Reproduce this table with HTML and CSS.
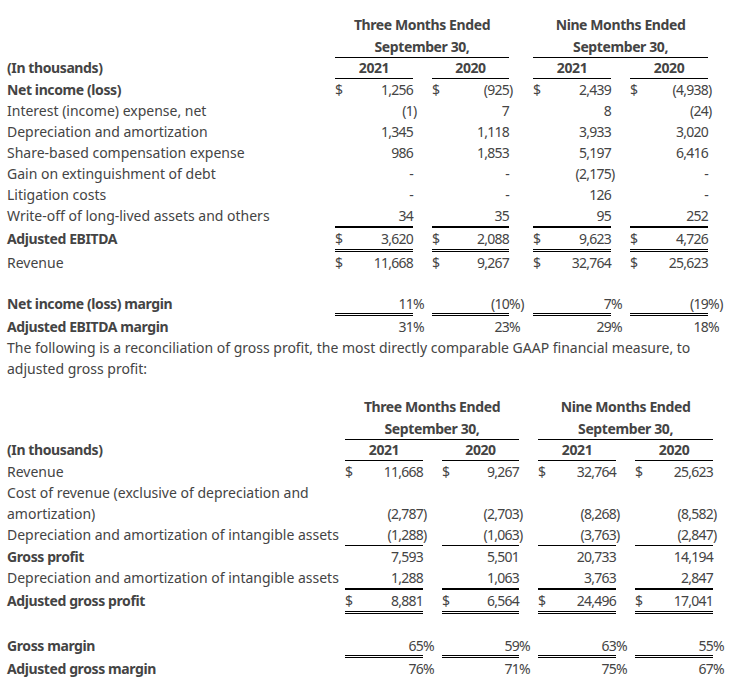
FILE: index.html
```html
<!DOCTYPE html>
<html>
<head>
<meta charset="utf-8">
<link rel="stylesheet" href="styles.css">
</head>
<body>
<div class="page">
  <table class="fin t1">
    <colgroup>
      <col class="c-label1"><col class="c-v"><col class="c-s19"><col class="c-v2"><col class="c-s24"><col class="c-v"><col class="c-s19"><col class="c-v"><col class="c-s17">
    </colgroup>
    <tbody>
      <tr class="r-h1"><td></td><td class="hd" colspan="3">Three Months Ended</td><td></td><td class="hd" colspan="3">Nine Months Ended</td><td></td></tr>
      <tr><td></td><td class="hd u1" colspan="3">September 30,</td><td></td><td class="hd u1" colspan="3">September 30,</td><td></td></tr>
      <tr class="r-yr"><td class="b">(In thousands)</td><td class="hd u1">2021</td><td></td><td class="hd u1">2020</td><td></td><td class="hd u1">2021</td><td></td><td class="hd u1">2020</td><td></td></tr>
      <tr><td class="b">Net income (loss)</td><td class="v"><span class="cur">$</span>1,256</td><td></td><td class="v"><span class="cur">$</span>(925</td><td class="s">)</td><td class="v"><span class="cur">$</span>2,439</td><td></td><td class="v"><span class="cur">$</span>(4,938</td><td class="s">)</td></tr>
      <tr><td>Interest (income) expense, net</td><td class="v">(1</td><td class="s">)</td><td class="v">7</td><td></td><td class="v">8</td><td></td><td class="v">(24</td><td class="s">)</td></tr>
      <tr><td>Depreciation and amortization</td><td class="v">1,345</td><td></td><td class="v">1,118</td><td></td><td class="v">3,933</td><td></td><td class="v">3,020</td><td></td></tr>
      <tr><td>Share-based compensation expense</td><td class="v">986</td><td></td><td class="v">1,853</td><td></td><td class="v">5,197</td><td></td><td class="v">6,416</td><td></td></tr>
      <tr><td>Gain on extinguishment of debt</td><td class="v">-</td><td></td><td class="v">-</td><td></td><td class="v">(2,175</td><td class="s">)</td><td class="v">-</td><td></td></tr>
      <tr><td>Litigation costs</td><td class="v">-</td><td></td><td class="v">-</td><td></td><td class="v">126</td><td></td><td class="v">-</td><td></td></tr>
      <tr><td>Write-off of long-lived assets and others</td><td class="v u2">34</td><td></td><td class="v u2">35</td><td></td><td class="v u2">95</td><td></td><td class="v u2">252</td><td></td></tr>
      <tr><td class="b">Adjusted EBITDA</td><td class="v dbl"><span class="cur">$</span>3,620</td><td></td><td class="v dbl"><span class="cur">$</span>2,088</td><td></td><td class="v dbl"><span class="cur">$</span>9,623</td><td></td><td class="v dbl"><span class="cur">$</span>4,726</td><td></td></tr>
      <tr><td>Revenue</td><td class="v"><span class="cur">$</span>11,668</td><td></td><td class="v"><span class="cur">$</span>9,267</td><td></td><td class="v"><span class="cur">$</span>32,764</td><td></td><td class="v"><span class="cur">$</span>25,623</td><td></td></tr>
      <tr class="gap"><td colspan="9"></td></tr>
      <tr class="r-mg"><td class="b">Net income (loss) margin</td><td class="v dbl">11</td><td class="s">%</td><td class="v dbl">(10</td><td class="s">%)</td><td class="v dbl">7</td><td class="s">%</td><td class="v dbl">(19</td><td class="s">%)</td></tr>
      <tr><td class="b">Adjusted EBITDA margin</td><td class="v">31</td><td class="s">%</td><td class="v">23</td><td class="s">%</td><td class="v">29</td><td class="s">%</td><td class="v">18</td><td class="s">%</td></tr>
    </tbody>
  </table>

  <p class="note">The following is a reconciliation of gross profit, the most directly comparable GAAP financial measure, to adjusted gross profit:</p>

  <table class="fin t2">
    <colgroup>
      <col class="c-label2"><col class="c-v"><col class="c-s19"><col class="c-v2"><col class="c-s19"><col class="c-v"><col class="c-s19"><col class="c-v"><col class="c-s11">
    </colgroup>
    <tbody>
      <tr class="r-h1"><td></td><td class="hd" colspan="3">Three Months Ended</td><td></td><td class="hd" colspan="3">Nine Months Ended</td><td></td></tr>
      <tr><td></td><td class="hd u1" colspan="3">September 30,</td><td></td><td class="hd u1" colspan="3">September 30,</td><td></td></tr>
      <tr class="r-yr"><td class="b">(In thousands)</td><td class="hd u1">2021</td><td></td><td class="hd u1">2020</td><td></td><td class="hd u1">2021</td><td></td><td class="hd u1">2020</td><td></td></tr>
      <tr><td>Revenue</td><td class="v"><span class="cur">$</span>11,668</td><td></td><td class="v"><span class="cur">$</span>9,267</td><td></td><td class="v"><span class="cur">$</span>32,764</td><td></td><td class="v"><span class="cur">$</span>25,623</td><td></td></tr>
      <tr class="wrap"><td>Cost of revenue (exclusive of depreciation and amortization)</td><td class="v">(2,787</td><td class="s">)</td><td class="v">(2,703</td><td class="s">)</td><td class="v">(8,268</td><td class="s">)</td><td class="v">(8,582</td><td class="s">)</td></tr>
      <tr><td class="nw">Depreciation and amortization of intangible assets</td><td class="v u1">(1,288</td><td class="s">)</td><td class="v u1">(1,063</td><td class="s">)</td><td class="v u1">(3,763</td><td class="s">)</td><td class="v u1">(2,847</td><td class="s">)</td></tr>
      <tr><td class="b">Gross profit</td><td class="v">7,593</td><td></td><td class="v">5,501</td><td></td><td class="v">20,733</td><td></td><td class="v">14,194</td><td></td></tr>
      <tr><td class="nw">Depreciation and amortization of intangible assets</td><td class="v u2">1,288</td><td></td><td class="v u2">1,063</td><td></td><td class="v u2">3,763</td><td></td><td class="v u2">2,847</td><td></td></tr>
      <tr><td class="b">Adjusted gross profit</td><td class="v dbl"><span class="cur">$</span>8,881</td><td></td><td class="v dbl"><span class="cur">$</span>6,564</td><td></td><td class="v dbl"><span class="cur">$</span>24,496</td><td></td><td class="v dbl"><span class="cur">$</span>17,041</td><td></td></tr>
      <tr class="gap gap-lg"><td colspan="9"></td></tr>
      <tr class="r-mg"><td class="b">Gross margin</td><td class="v dbl">65</td><td class="s">%</td><td class="v dbl">59</td><td class="s">%</td><td class="v dbl">63</td><td class="s">%</td><td class="v dbl">55</td><td class="s">%</td></tr>
      <tr><td class="b">Adjusted gross margin</td><td class="v">76</td><td class="s">%</td><td class="v">71</td><td class="s">%</td><td class="v">75</td><td class="s">%</td><td class="v">67</td><td class="s">%</td></tr>
    </tbody>
  </table>
</div>
</body>
</html>
```
FILE: styles.css
```css
html, body {
  margin: 0;
  padding: 0;
  background: #ffffff;
}

body {
  color: #444444;
  font-family: "Noto Sans", "Open Sans", sans-serif;
  font-size: 14px;
  line-height: 21px;
}

.page {
  padding: 14px 7px 0 7px;
}

.fin {
  border-collapse: collapse;
  border-spacing: 0;
  table-layout: fixed;
}

.t1 { width: 718px; }
.t2 { width: 717px; margin-top: 17px; }

.c-label1 { width: 328px; }
.c-label2 { width: 338px; }
.c-v { width: 78px; }
.c-v2 { width: 77px; }
.c-s19 { width: 19px; }
.c-s24 { width: 24px; }
.c-s17 { width: 17px; }
.c-s11 { width: 11px; }

.fin td {
  padding: 0;
  line-height: 21px;
  vertical-align: baseline;
  font-weight: 400;
}

.fin .r-h1 td { padding-bottom: 1px; }
.fin .r-yr td { line-height: 20px; }
.fin .r-mg td { line-height: 19px; }
.fin .gap td { height: 21px; }
.fin .gap-lg td { height: 22px; }
.fin .wrap td { vertical-align: bottom; }

.b {
  font-weight: 700 !important;
  letter-spacing: -0.4px;
}

.hd {
  text-align: center;
  font-weight: 700 !important;
  letter-spacing: -0.4px;
}

.nw { white-space: nowrap; }

.v {
  text-align: right;
  white-space: nowrap;
  letter-spacing: -0.75px;
}

.cur {
  float: left;
  letter-spacing: 0;
}

.s {
  text-align: left;
  white-space: nowrap;
  letter-spacing: -0.5px;
}

.u1 { border-bottom: 1px solid #000; }
.u2 { border-bottom: 2px solid #000; }
.dbl { border-bottom: 3px double #000; }

.note {
  margin: 0;
  width: 718px;
}
```
